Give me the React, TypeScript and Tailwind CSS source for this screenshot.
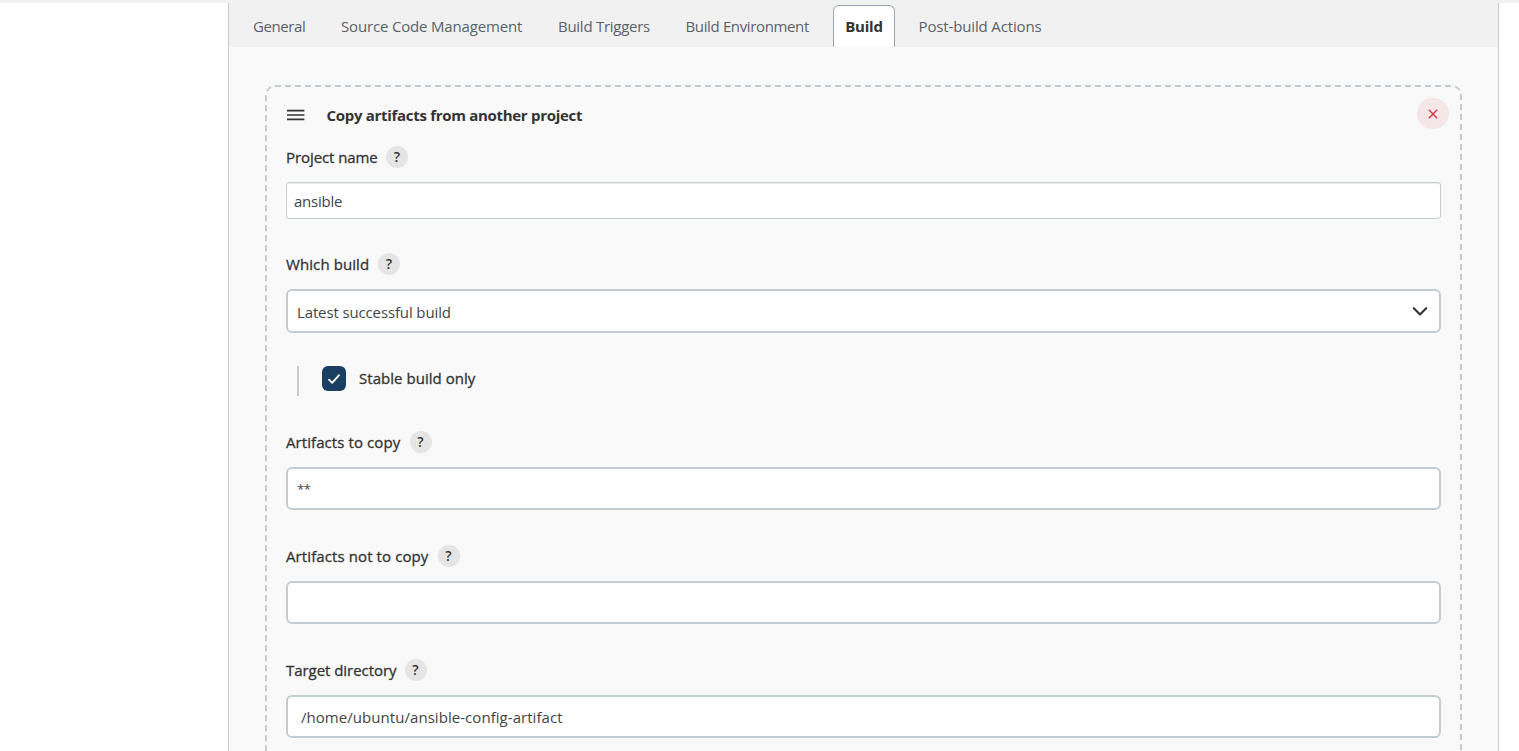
import type { ReactNode } from "react";

const tabs = [
  { name: "General", style: "ml-[24px] w-[52px] tracking-[-0.4px]" },
  { name: "Source Code Management", style: "ml-[36px] w-[181px] tracking-[-0.17px]" },
  { name: "Build Triggers", style: "ml-[36px] w-[92px] tracking-[-0.27px]" },
  { name: "Build Environment", style: "ml-[35.5px] w-[123.5px] tracking-[-0.36px]" },
];

function Label({ text, className }: { text: string; className: string }) {
  return (
    <div className="flex h-[22px] items-center">
      <span className={`shrink-0 text-[15px] leading-[22px] [-webkit-text-stroke:0.3px_#333] ${className}`}>
        <span>{text}</span>
      </span>
      <button className="flex size-[22px] shrink-0 items-center justify-center rounded-full bg-[#e5e5e5] pb-px text-[14px] leading-none font-semibold">
        ?
      </button>
    </div>
  );
}

function Field({ children, className = "" }: { children?: ReactNode; className?: string }) {
  return (
    <div
      className={`flex items-center rounded-[6px] border-2 border-[#c3ccd1] bg-white px-[9px] pt-[2px] text-[15px] text-[#444] ${className}`}
    >
      {children}
    </div>
  );
}

export default function App() {
  return (
    <div className="h-[751px] w-[1519px] overflow-hidden bg-white font-['Open_Sans','Noto_Sans',sans-serif] whitespace-nowrap text-[#333]">
      <div className="h-[3px] bg-[#f1f1f1]" />
      <main className="ml-[228px] h-[748px] w-[1271px] border-x border-[#c3ccd1] bg-[#f9f9f9]">
        <nav className="flex h-[44px] bg-[#f1f1f1] text-[15px] leading-[22px] text-[#5a616a]">
          {tabs.map((tab) => (
            <a key={tab.name} className={`mt-[12px] shrink-0 ${tab.style}`}>
              <span>{tab.name}</span>
            </a>
          ))}
          <a className="mt-[2px] ml-[24px] flex h-[42px] w-[62px] shrink-0 justify-center rounded-t-[6px] border border-b-0 border-[#98a6b3] bg-white pt-[9px] font-bold tracking-[-0.2px] text-[#333]">
            <span>Build</span>
          </a>
          <a className="mt-[12px] ml-[23.5px] tracking-[-0.14px]">
            <span>Post-build Actions</span>
          </a>
        </nav>
        <section className="mt-[38px] ml-[36px] h-[760px] w-[1197px] rounded-[10px] border-2 border-dashed border-[#c3ccd1] px-[19px] pt-[11px]">
          <header className="flex h-[32px] items-center">
            <svg className="mt-px h-[12px] w-[19px]" viewBox="0 0 19 12" stroke="#333" strokeWidth="1.7">
              <path d="M1 1.7h17.4M1 6h17.4M1 10.3h17.4" />
            </svg>
            <h2 className="ml-[21.5px] pt-[2px] text-[15px] font-bold tracking-[-0.3px]">
              <span>Copy artifacts from another project</span>
            </h2>
            <button className="mt-[-1px] mr-[-8px] ml-auto flex h-[31px] w-[32px] items-center justify-center rounded-full bg-[#f5e6e8]">
              <svg className="size-[10px]" viewBox="0 0 10 10" stroke="#dc3545" strokeWidth="1.4">
                <path d="M0.8 0.8l8.4 8.4M9.2 0.8L0.8 9.2" />
              </svg>
            </button>
          </header>
          <div className="mt-[16px]">
            <Label text="Project name" className="w-[100px] tracking-[-0.08px]" />
            <div className="mt-[14px] flex h-[37px] items-center rounded-[3px] border border-[#c3ccd1] bg-white px-[7px] pt-px text-[15px] tracking-[-0.25px] text-[#444] shadow-[inset_0_1px_1px_rgba(0,0,0,0.07)]">
              <span>ansible</span>
            </div>
          </div>
          <div className="mt-[34px]">
            <Label text="Which build" className="w-[92px] tracking-[0.09px]" />
            <Field className="mt-[14px] h-[44px] justify-between tracking-[-0.13px]">
              <span>Latest successful build</span>
              <svg className="mr-[2px] mb-[2px] h-[9px] w-[16px]" viewBox="0 0 16 9" fill="none" stroke="#333" strokeWidth="2.1" strokeLinecap="round" strokeLinejoin="round">
                <path d="M1.8 1.2L8 7.4l6.2-6.2" />
              </svg>
            </Field>
          </div>
          <div className="mt-[33px] ml-[11px] flex h-[30px] border-l-2 border-[#c3ccd1] pl-[23px]">
            <span className="flex h-[25px] w-[24px] items-center justify-center rounded-[6px] bg-[#1b3f62]">
              <svg className="h-[10px] w-[12px]" viewBox="0 0 12 10" fill="none" stroke="white" strokeWidth="1.8" strokeLinecap="round" strokeLinejoin="round">
                <path d="M1 5.6l3.2 3.2L11 1.2" />
              </svg>
            </span>
            <span className="ml-[13px] pt-px text-[15px] leading-[22px] tracking-[0.04px] [-webkit-text-stroke:0.3px_#333]">
              <span>Stable build only</span>
            </span>
          </div>
          <div className="mt-[35px]">
            <Label text="Artifacts to copy" className="w-[123.5px] tracking-[0.08px]" />
            <Field className="mt-[14px] h-[43px]">
              <span className="text-[13px] tracking-[-0.3px]">**</span>
            </Field>
          </div>
          <div className="mt-[35px]">
            <Label text="Artifacts not to copy" className="w-[151.5px] tracking-[0.1px]" />
            <Field className="mt-[14px] h-[43px]" />
          </div>
          <div className="mt-[35px]">
            <Label text="Target directory" className="w-[118.5px] tracking-[-0.05px]" />
            <Field className="mt-[14px] h-[43px] tracking-[0.05px]">
              <span className="ml-[4px]">/home/ubuntu/ansible-config-artifact</span>
            </Field>
          </div>
        </section>
      </main>
    </div>
  );
}
